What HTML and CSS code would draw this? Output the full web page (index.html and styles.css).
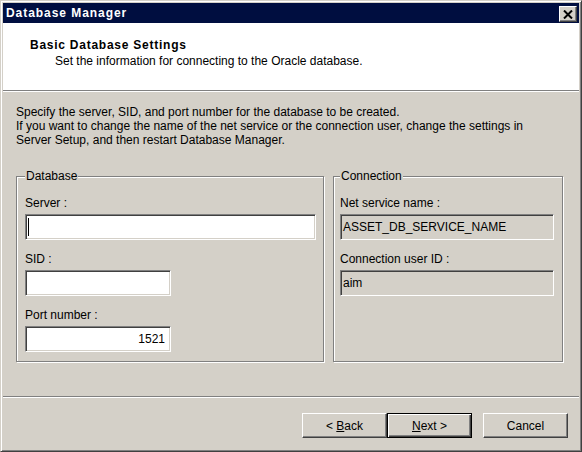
FILE: index.html
```html
<!doctype html>
<html lang="en">
  <head>
    <meta charset="UTF-8" />
    <title>Database Manager</title>
    <link rel="stylesheet" href="styles.css">
  </head>
  <body>
    <div class="window">
      <div class="titlebar">
        <span class="title">Database Manager</span>
        <span class="close-btn">
          <svg width="10" height="9" viewBox="0 0 10 9">
            <path d="M1 0.5 L9 8.5 M9 0.5 L1 8.5" stroke="#000" stroke-width="2" fill="none" />
          </svg>
        </span>
      </div>

      <div class="header">
        <h1>Basic Database Settings</h1>
        <p>Set the information for connecting to the Oracle database.</p>
      </div>

      <div class="content">
        <p class="intro">
          Specify the server, SID, and port number for the database to be created.<br>
          If you want to change the name of the net service or the connection user, change the settings in<br>
          Server Setup, and then restart Database Manager.
        </p>

        <div class="groups">
          <fieldset class="group group-db">
            <legend>Database</legend>
            <label>Server :</label>
            <div class="field field-server"><span class="caret"></span></div>
            <label>SID :</label>
            <div class="field field-short"></div>
            <label>Port number :</label>
            <div class="field field-short field-num">1521</div>
          </fieldset>

          <fieldset class="group group-conn">
            <legend>Connection</legend>
            <label>Net service name :</label>
            <div class="field field-conn readonly">ASSET_DB_SERVICE_NAME</div>
            <label>Connection user ID :</label>
            <div class="field field-conn readonly">aim</div>
          </fieldset>
        </div>
      </div>

      <div class="footer">
        <button class="btn">&lt; <u>B</u>ack</button>
        <button class="btn btn-default"><u>N</u>ext &gt;</button>
        <button class="btn btn-cancel">Cancel</button>
      </div>
    </div>
  </body>
</html>
```

FILE: styles.css
```css
* {
  margin: 0;
  padding: 0;
  box-sizing: border-box;
}

body {
  background: #d4d0c8;
  font-family: "Liberation Sans", Arial, sans-serif;
  font-size: 12px;
  color: #000;
}

.window {
  width: 582px;
  height: 452px;
  display: flex;
  flex-direction: column;
  background: #d4d0c8;
  border: 1px solid;
  border-color: #d4d0c8 #404040 #404040 #d4d0c8;
  box-shadow: inset 1px 1px #fff, inset -1px -1px #808080;
  padding: 2px;
}

.titlebar {
  height: 20px;
  background: #000e40;
  display: flex;
  align-items: center;
  justify-content: space-between;
  padding: 0 2px 0 3px;
}

.title {
  color: #fff;
  font-weight: bold;
  font-size: 12px;
  letter-spacing: 0.95px;
}

.close-btn {
  width: 18px;
  height: 16px;
  margin-top: 2px;
  display: flex;
  align-items: center;
  justify-content: center;
  background: #d4d0c8;
  border: 1px solid;
  border-color: #fff #404040 #404040 #fff;
  box-shadow: inset -1px -1px #808080;
}

.header {
  height: 68px;
  background: #fff;
  border-bottom: 1px solid #808080;
  padding: 14px 0 0 27px;
}

.header h1 {
  font-size: 12px;
  font-weight: bold;
  line-height: 17px;
  letter-spacing: 0.75px;
}

.header p {
  line-height: 14px;
  margin-left: 25px;
}

.content {
  flex: 1;
  border-top: 1px solid #fff;
  padding: 13px 13px 0;
}

.intro {
  line-height: 14px;
}

.groups {
  display: flex;
  gap: 9px;
  margin-top: 22px;
}

.group {
  border: 1px solid #808080;
  box-shadow: inset 1px 1px #fff, 1px 1px #fff;
  padding: 13px 8px 9px;
  min-width: 0;
}

.group legend {
  line-height: 14px;
  padding: 0 1px;
  background: #d4d0c8;
}

.group-db {
  width: 308px;
}

.group-conn {
  width: 230px;
  padding-left: 6px;
}

.group label {
  display: block;
  line-height: 14px;
  margin-bottom: 4px;
}

.field {
  position: relative;
  height: 26px;
  margin-bottom: 12px;
  background: #fff;
  border: 1px solid;
  border-color: #808080 #fff #fff #808080;
  box-shadow: inset 1px 1px #404040, inset -1px -1px #d4d0c8;
  padding: 0 3px;
  line-height: 24px;
  white-space: nowrap;
}

.field:last-child {
  margin-bottom: 0;
}

.field-server {
  width: 291px;
}

.field-short {
  width: 146px;
}

.field-num {
  text-align: right;
  padding-right: 5px;
}

.field-conn {
  width: 214px;
  padding-left: 2px;
}

.readonly {
  background: #d4d0c8;
}

.caret {
  position: absolute;
  left: 2px;
  top: 3px;
  width: 1px;
  height: 18px;
  background: #000;
}

.footer {
  height: 53px;
  display: flex;
  justify-content: flex-end;
  align-items: flex-start;
  border-top: 1px solid #808080;
  box-shadow: inset 0 1px #fff;
  padding: 16px 11px 0 0;
}

.btn {
  width: 85px;
  height: 25px;
  font-family: inherit;
  font-size: 12px;
  color: #000;
  background: #d4d0c8;
  border: 1px solid;
  border-color: #fff #404040 #404040 #fff;
  box-shadow: inset -1px -1px #808080;
}

.btn-default {
  border-color: #000;
  box-shadow: inset 1px 1px #fff, inset -1px -1px #404040, inset -2px -2px #808080;
}

.btn-cancel {
  margin-left: 11px;
}
```
